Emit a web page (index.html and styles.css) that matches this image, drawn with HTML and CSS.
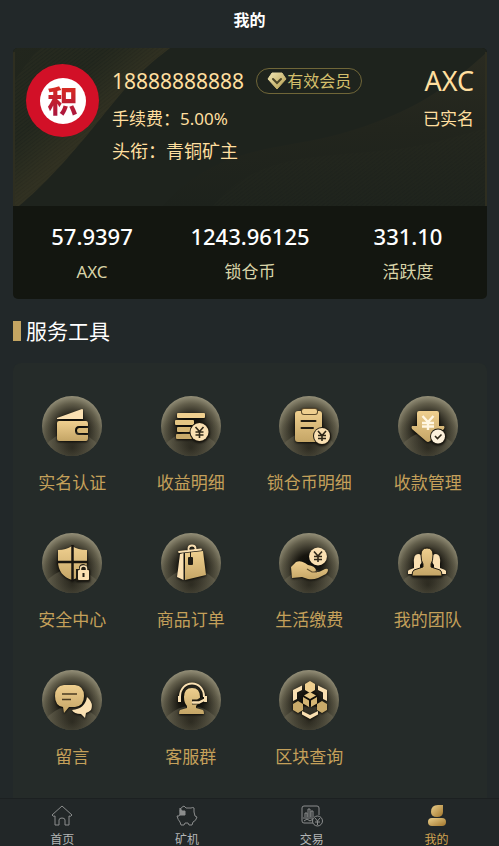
FILE: index.html
```html
<!DOCTYPE html>
<html lang="zh-CN">
<head>
    <meta charset="UTF-8">
    <meta name="viewport" content="width=device-width, initial-scale=1">
    <title>我的</title>
    <link rel="stylesheet" href="styles.css">
</head>
<body>
    <!-- shared gradients and the round icon base -->
    <svg class="defs" width="0" height="0" aria-hidden="true">
        <defs>
            <radialGradient id="disc" cx="0.5" cy="0.56" r="0.58">
                <stop offset="0" stop-color="#080704"/>
                <stop offset="0.35" stop-color="#17150f"/>
                <stop offset="0.75" stop-color="#625e4b"/>
                <stop offset="1" stop-color="#9d9880"/>
            </radialGradient>
            <linearGradient id="shade" x1="0" y1="0" x2="0" y2="1">
                <stop offset="0.4" stop-color="#2b2b22" stop-opacity="0"/>
                <stop offset="1" stop-color="#2b2b22" stop-opacity="0.6"/>
            </linearGradient>
            <radialGradient id="hill" cx="0.5" cy="0.25" r="0.5">
                <stop offset="0" stop-color="#2a281e"/>
                <stop offset="1" stop-color="#7d7862"/>
            </radialGradient>
            <linearGradient id="gold" x1="0" y1="0" x2="0" y2="1">
                <stop offset="0" stop-color="#efcf8f"/>
                <stop offset="1" stop-color="#c4a566"/>
            </linearGradient>
            <linearGradient id="member" x1="0" y1="0" x2="1" y2="1">
                <stop offset="0" stop-color="#f2e7b4"/>
                <stop offset="1" stop-color="#b39c4c"/>
            </linearGradient>
            <linearGradient id="user" x1="0" y1="0" x2="1" y2="1">
                <stop offset="0" stop-color="#ecd08c"/>
                <stop offset="1" stop-color="#a1752c"/>
            </linearGradient>
            <clipPath id="round"><circle cx="30" cy="30" r="30"/></clipPath>
            <symbol id="base" viewBox="0 0 60 60">
                <circle cx="30" cy="30" r="30" fill="url(#disc)"/>
                <circle cx="30" cy="30" r="30" fill="url(#shade)"/>
                <g clip-path="url(#round)">
                    <circle cx="30" cy="68" r="32" fill="url(#hill)" opacity="0.6"/>
                </g>
            </symbol>
        </defs>
    </svg>

    <header class="header">
        <h1 class="header-title">我的</h1>
    </header>

    <main class="main">
        <section class="card">
            <div class="profile">
                <svg class="profile-bg" viewBox="0 0 474 158" preserveAspectRatio="none" aria-hidden="true">
                    <defs>
                        <linearGradient id="waveLeft" x1="0" y1="0" x2="1" y2="1">
                            <stop offset="0" stop-color="#22261d"/>
                            <stop offset="0.3" stop-color="#1f241c"/>
                            <stop offset="0.5" stop-color="#2e2e20"/>
                        </linearGradient>
                        <linearGradient id="waveRight" x1="0" y1="0" x2="0" y2="1">
                            <stop offset="0" stop-color="#2a2b21"/>
                            <stop offset="0.5" stop-color="#22251d"/>
                            <stop offset="1" stop-color="#1d221c"/>
                        </linearGradient>
                        <pattern id="threads" width="3" height="3" patternUnits="userSpaceOnUse" patternTransform="rotate(-38)">
                            <path d="M0 1H3" stroke="#4b472c" stroke-width="1" opacity="0.2"/>
                        </pattern>
                    </defs>
                    <path d="M0 0H157C120 28 108 46 88 70C56 110 30 138 6 158H0Z" fill="url(#waveLeft)"/>
                    <path d="M0 34C10 22 16 10 28 0H157C120 28 108 46 88 70C56 110 30 138 6 158H0Z" fill="url(#threads)"/>
                    <path d="M474 4C426 48 388 68 330 85C290 96 256 98 226 108C190 120 164 140 150 158H474Z" fill="url(#waveRight)"/>
                    <path d="M430 92C380 106 320 104 282 112C240 120 216 138 200 158H474V80Z" fill="url(#threads)" opacity="0.4"/>
                    <path d="M1 4V158M473 4V158" stroke="#2e2e20" stroke-width="2"/>
                </svg>
                <div class="avatar"><span class="avatar-inner"><span class="avatar-text">积</span></span></div>
                <div class="info">
                    <div class="info-top">
                        <span class="phone">18888888888</span>
                        <span class="badge">
                            <svg width="20" height="18" viewBox="0 0 20 18" aria-hidden="true">
                                <path d="M5 1H15L19 7L10 17L1 7Z" fill="url(#member)" stroke="url(#member)" stroke-linejoin="round"/>
                                <path d="M6 7L10 11L14 7" fill="none" stroke="#4b4527" stroke-width="2" stroke-linecap="round"/>
                            </svg>
                            有效会员
                        </span>
                    </div>
                    <div class="fee">手续费：5.00%</div>
                    <div class="rank">头衔：青铜矿主</div>
                </div>
                <div class="side">
                    <div class="coin">AXC</div>
                    <div class="fee">已实名</div>
                </div>
            </div>
            <div class="stats">
                <div class="stat"><strong class="stat-num">57.9397</strong><span class="stat-label">AXC</span></div>
                <div class="stat"><strong class="stat-num">1243.96125</strong><span class="stat-label">锁仓币</span></div>
                <div class="stat"><strong class="stat-num">331.10</strong><span class="stat-label">活跃度</span></div>
            </div>
        </section>

        <h2 class="section-title">服务工具</h2>

        <nav class="tools">
            <a class="tool" href="#">
                <svg class="tool-icon" viewBox="0 0 60 60" aria-hidden="true">
                    <use href="#base"/>
                    <g class="glyph">
                        <path d="M15 22L40 13Q41 13 41 14V23H15Z" fill="#fae0b2"/>
                        <path d="M17 25H44Q46 25 46 28V30H37Q33 30 33 34.5Q33 39 37 39H46V42Q46 45 44 45H17Q15 45 15 43V27Q15 25 17 25Z" fill="url(#gold)"/>
                        <path d="M37 32H46V37H37Q35 37 35 34.5T37 32Z" fill="#d8b876"/>
                    </g>
                </svg>
                <span>实名认证</span>
            </a>
            <a class="tool" href="#">
                <svg class="tool-icon" viewBox="0 0 60 60" aria-hidden="true">
                    <use href="#base"/>
                    <g class="glyph">
                        <rect x="16" y="17" width="28" height="5" rx="1" fill="#efcf8f"/>
                        <rect x="14" y="24" width="19" height="5" rx="1" fill="#e5c684"/>
                        <rect x="16" y="31" width="15" height="5" rx="1" fill="#d5b674"/>
                        <rect x="15" y="38" width="16" height="5" rx="1" fill="#c8aa6a"/>
                        <circle cx="38.5" cy="36" r="10" fill="#201c13"/>
                        <circle cx="38.5" cy="36" r="9" fill="#fae0b2"/>
                        <path d="M34.5 31L38.5 35.5L42.5 31M38.5 35V42M34.5 36H42.5M34.5 39H42.5" class="yen"/>
                    </g>
                </svg>
                <span>收益明细</span>
            </a>
            <a class="tool" href="#">
                <svg class="tool-icon" viewBox="0 0 60 60" aria-hidden="true">
                    <use href="#base"/>
                    <g class="glyph">
                        <rect x="16" y="15" width="27" height="31" rx="3" fill="url(#gold)"/>
                        <rect x="22" y="12" width="17" height="7" rx="3" fill="#5c4a2b"/>
                        <rect x="23" y="13" width="15" height="5" rx="2" fill="#efcf8f"/>
                        <path d="M22.5 25H36.5M22.5 32H34" stroke="#201c13" stroke-width="2" stroke-linecap="round"/>
                        <circle cx="43" cy="40" r="9" fill="#201c13"/>
                        <circle cx="43" cy="40" r="8" fill="#fae0b2"/>
                        <path d="M39 35L43 39.5L47 35M43 39V45M39 39.5H47M39 42.5H47" class="yen"/>
                    </g>
                </svg>
                <span>锁仓币明细</span>
            </a>
            <a class="tool" href="#">
                <svg class="tool-icon" viewBox="0 0 60 60" aria-hidden="true">
                    <use href="#base"/>
                    <g class="glyph">
                        <path d="M21 15H39Q41 15 41 17V30H46Q47 31 46 33L32 45Q30 47 28 45L14 33Q13 31 14 30H19V17Q19 15 21 15Z" fill="url(#gold)"/>
                        <path d="M24.5 20L30 26L35.5 20M30 26V34M24 27H36M24 30.5H36" fill="none" stroke="#fff6e2" stroke-width="2.4"/>
                        <circle cx="40" cy="40.5" r="8" fill="#201c13"/>
                        <circle cx="40" cy="40.5" r="7" fill="#fdf1dc"/>
                        <path d="M37 40L39.5 42.5L43.5 38.5" class="yen"/>
                    </g>
                </svg>
                <span>收款管理</span>
            </a>
            <a class="tool" href="#">
                <svg class="tool-icon" viewBox="0 0 60 60" aria-hidden="true">
                    <use href="#base"/>
                    <g class="glyph">
                        <path d="M30 13Q36 17 45 17V28C45 38 39 44 30 47C21 44 16 38 16 28V17Q24 17 30 13Z" fill="url(#gold)"/>
                        <path d="M30.5 12V48M15 29H46" stroke="#181510" stroke-width="2.5"/>
                        <path d="M34 36H37V34Q38 31 41 31T45 34V36H48V48H34Z" fill="#201c13"/>
                        <rect x="36" y="37" width="11" height="10" rx="1" fill="#fae0b2"/>
                        <path d="M38.5 37V35.5Q38.5 33 41.5 33T44.5 35.5V37" fill="none" stroke="#fae0b2" stroke-width="1.5"/>
                        <path d="M41.5 40V44" stroke="#201c13" stroke-width="2"/>
                    </g>
                </svg>
                <span>安全中心</span>
            </a>
            <a class="tool" href="#">
                <svg class="tool-icon" viewBox="0 0 60 60" aria-hidden="true">
                    <use href="#base"/>
                    <g class="glyph">
                        <path d="M24 20L42 18L45 42L24 47Z" fill="url(#gold)"/>
                        <path d="M19 21L22.5 20V47L16 44Z" fill="#fae0b2"/>
                        <path d="M18 19L40 16.5M27.5 17V15Q28 12.500 31 12.500T34.5 15V17" fill="none" stroke="#fae0b2" stroke-width="1.8" stroke-linecap="round"/>
                        <path d="M29.5 19V25" stroke="#201c13"/>
                        <rect x="27" y="24" width="5" height="8" rx="1" fill="#201c13"/>
                    </g>
                </svg>
                <span>商品订单</span>
            </a>
            <a class="tool" href="#">
                <svg class="tool-icon" viewBox="0 0 60 60" aria-hidden="true">
                    <use href="#base"/>
                    <g class="glyph">
                        <circle cx="39" cy="23.5" r="9" fill="#fae0b2"/>
                        <path d="M35 18.5L39 23L43 18.5M39 23V29M35 23.5H43M35 26.5H43" class="yen"/>
                        <path d="M12 34L17 29Q21 27 26 30L29 32Q36 33 37 37Q37 39 35 39L40 39L46 36Q49 35 49 37Q49 39 47 41L39 45Q34 47 29 46L23 44L13 45Z" fill="url(#gold)"/>
                        <path d="M28 36L33 39H38" fill="none" stroke="#604f30" stroke-width="1.2"/>
                    </g>
                </svg>
                <span>生活缴费</span>
            </a>
            <a class="tool" href="#">
                <svg class="tool-icon" viewBox="0 0 60 60" aria-hidden="true">
                    <use href="#base"/>
                    <g class="glyph">
                        <path id="mate" d="M20 21Q24 21 24 26Q24 30 22 32V35L20 37L15 41H10V38Q10 37 16 35V31Q15 21 20 21Z" fill="#fae0b2"/>
                        <use href="#mate" transform="matrix(-1 0 0 1 58 0)"/>
                        <path d="M29 15Q35 15 35 22Q35 28 33 31V34L42 37Q44 38 44 43H14Q14 38 16 37L25 34V31Q23 28 23 22Q23 15 29 15Z" fill="url(#gold)" stroke="#201c13" stroke-width="1"/>
                    </g>
                </svg>
                <span>我的团队</span>
            </a>
            <a class="tool" href="#">
                <svg class="tool-icon" viewBox="0 0 60 60" aria-hidden="true">
                    <use href="#base"/>
                    <g class="glyph">
                        <path d="M45 27Q52 33 49 40Q47 42 44 43L43 48L39 44Q32 44 30 40Q43 39 45 27Z" fill="#fae0b2"/>
                        <path d="M22 15H33Q42 16 42 26T33 37H27L22 43L21 37Q13 36 13 26T22 15Z" fill="url(#gold)"/>
                        <path d="M20 24H35M20 29.5H29" stroke="#4a3b22" stroke-width="1.5"/>
                    </g>
                </svg>
                <span>留言</span>
            </a>
            <a class="tool" href="#">
                <svg class="tool-icon" viewBox="0 0 60 60" aria-hidden="true">
                    <use href="#base"/>
                    <g class="glyph">
                        <path d="M31 18Q39 18 39 27Q39 33 35 36V38L42 40Q43 41 43 44H18Q18 41 19 40L26 38V36Q23 33 23 27Q23 18 31 18Z" fill="url(#gold)"/>
                        <path d="M19 27C19 9 43 9 43 27" fill="none" stroke="#fae0b2" stroke-width="2"/>
                        <path d="M18.5 26V32M44.5 26V32" stroke="#fae0b2" stroke-width="3"/>
                        <path d="M31 32H37L42 29" fill="none" stroke="#201c13" stroke-width="5"/>
                        <path d="M32 32.5H38L43 30" fill="none" stroke="#fae0b2" stroke-width="2.5" stroke-linecap="round"/>
                    </g>
                </svg>
                <span>客服群</span>
            </a>
            <a class="tool" href="#">
                <svg class="tool-icon" viewBox="0 0 60 60" aria-hidden="true">
                    <use href="#base"/>
                    <g class="glyph">
                        <path d="M31 11L36 14V20L31 23L26 20V14Z" fill="#efcf8f"/>
                        <path d="M19 31L24 34V40L19 43L14 40V34ZM43 31L48 34V40L43 43L38 40V34Z" fill="#c9aa69"/>
                        <path d="M31 22L37 25.5L31 29L25 25.5Z" fill="#e5c684"/>
                        <path d="M24 27L30 30.5V37L24 33.5ZM38 27L32 30.5V37L38 33.5Z" fill="#d5b674"/>
                        <path d="M14 20L23 15.5V20L18 22.5V29L14 31ZM48 20L39 15.5V20L44 22.5V29L48 31ZM23 41L31 45L39 41V44.5L31 49L23 44.5Z" fill="#fae0b2"/>
                    </g>
                </svg>
                <span>区块查询</span>
            </a>
        </nav>
    </main>

    <nav class="tabbar">
        <a class="tab" href="#">
            <svg class="tab-icon" viewBox="0 0 22 22" aria-hidden="true">
                <path d="M11 1L21 10Q20 12 18 11V20H14V15Q14 13 11 13T8 15V20H4V11Q2 12 1 10Z"/>
            </svg>
            <span>首页</span>
        </a>
        <a class="tab" href="#">
            <svg class="tab-icon" viewBox="0 0 22 22" aria-hidden="true">
                <path d="M4 5Q5 2 8 1L10 3H15Q17 2 18 3V7L19 11L21 12Q20 16 17 17L16 20H13L12 18H9L8 20H5L4 17Q2 15 1 11H3Q5 10 4 5Z"/>
                <path d="M4 3L6 6H9V10H4Z" fill="#8b8d8d"/>
            </svg>
            <span>矿机</span>
        </a>
        <a class="tab" href="#">
            <svg class="tab-icon" viewBox="0 0 22 22" aria-hidden="true">
                <path d="M12 18H3Q1 18 1 16V3Q1 1 3 1H16Q18 1 18 3V10M2 13H12M4 12V8H6V12M7 12V4H9V12M10 12V6H12V12M3 16L6 14L9 16L12 14"/>
                <circle cx="16.5" cy="16" r="5"/>
                <path d="M14 13L16.5 16L19 13M16.5 16V20M14 17H19"/>
            </svg>
            <span>交易</span>
        </a>
        <a class="tab active" href="#">
            <svg class="tab-icon" viewBox="0 0 22 22" aria-hidden="true">
                <path d="M17 0V7Q17 12 11 12T5 7Q5 0 12 0Z" fill="url(#user)" stroke="none"/>
                <rect x="2" y="13" width="18" height="8" rx="4" fill="url(#user)" stroke="none"/>
            </svg>
            <span>我的</span>
        </a>
    </nav>
</body>
</html>
```
FILE: styles.css
```css
* {
    box-sizing: border-box;
}
body {
    margin: 0;
    min-height: 100vh;
    display: flex;
    flex-direction: column;
    background: #222829;
    color: #fff;
    font-family: "Noto Sans", "Noto Sans CJK SC", sans-serif;
}
a {
    color: inherit;
    text-decoration: none;
}
.defs {
    position: absolute;
}
.header {
    padding: 8px 0 16px;
    text-align: center;
}
.header-title {
    margin: 0;
    font-size: 16px;
    line-height: 24px;
}
.main {
    flex: 1;
    display: flex;
    flex-direction: column;
    padding: 0 12px 0 13px;
}

/* profile card */
.card {
    border-radius: 5px;
    overflow: hidden;
    background: #131610;
}
.profile {
    position: relative;
    display: flex;
    gap: 13px;
    padding: 16px 13px 40px;
    background: #1e231d;
    color: #ffdf9f;
}
.profile-bg {
    position: absolute;
    left: 0;
    top: 0;
    width: 100%;
    height: 100%;
}
.avatar,
.info,
.side {
    position: relative;
}
.avatar {
    display: flex;
    align-items: center;
    justify-content: center;
    flex: none;
    width: 73px;
    height: 73px;
    border-radius: 50%;
    background: #d21027;
}
.avatar-inner {
    display: flex;
    align-items: center;
    justify-content: center;
    width: 46px;
    height: 46px;
    border-radius: 50%;
    background: #fff;
}
.avatar-text {
    font-size: 30px;
    line-height: 32px;
    font-weight: 900;
    background: linear-gradient(#dc2d20, #a81440);
    -webkit-background-clip: text;
    background-clip: text;
    color: transparent;
}
.info {
    flex: 1;
}
.info-top {
    display: flex;
    align-items: center;
    gap: 12px;
    height: 34px;
}
.phone {
    font-size: 21px;
}
.badge {
    display: flex;
    align-items: center;
    height: 26px;
    padding: 0 10px;
    border: 1px solid #706638;
    border-radius: 13px;
    color: #d3bf6c;
    font-size: 16px;
    line-height: 24px;
    white-space: nowrap;
}
.fee {
    padding-top: 4px;
    font-size: 17px;
    line-height: 34px;
}
.rank {
    font-size: 18px;
    line-height: 30px;
}
.side {
    text-align: right;
}
.coin {
    font-size: 27px;
    line-height: 34px;
}
.stats {
    display: flex;
    padding: 13px 0;
}
.stat {
    flex: 1;
    display: flex;
    flex-direction: column;
    align-items: center;
}
.stat-num {
    font-size: 22px;
    font-weight: 500;
    line-height: 34px;
}
.stat-label {
    padding-top: 5px;
    font-size: 17px;
    line-height: 28px;
    color: #d9d4a8;
}

/* service tools */
.section-title {
    display: flex;
    align-items: center;
    gap: 5px;
    margin: 16px 0;
    font-size: 21px;
    font-weight: 400;
    line-height: 32px;
}
.section-title::before {
    content: "";
    width: 8px;
    height: 20px;
    background: #c4a562;
}
.tools {
    flex: 1;
    display: grid;
    grid-template-columns: repeat(4, 1fr);
    align-content: start;
    row-gap: 35px;
    padding: 33px 0 24px;
    border-radius: 8px 8px 0 0;
    background: #252b29;
}
.tool {
    display: flex;
    flex-direction: column;
    align-items: center;
    gap: 12px;
    font-size: 17px;
    line-height: 30px;
    color: #c4a05a;
}
.tool-icon {
    width: 60px;
    height: 60px;
}
.glyph {
    filter: drop-shadow(0 1px 1px #0b0a07);
}
.yen {
    fill: none;
    stroke: #302819;
    stroke-width: 1.6;
}

/* bottom tabs */
.tabbar {
    position: sticky;
    bottom: 0;
    display: flex;
    height: 48px;
    overflow: hidden;
    border-top: 1px solid #1c2021;
    background: #222728;
}
.tab {
    flex: 1;
    display: flex;
    flex-direction: column;
    align-items: center;
    padding-top: 6px;
    gap: 4px;
    font-size: 12px;
    line-height: 18px;
    color: #b3b5b5;
}
.tab-icon {
    flex: none;
    width: 22px;
    height: 22px;
    fill: none;
    stroke: #8b8d8d;
}
.tab.active {
    color: #d3a552;
}
```
